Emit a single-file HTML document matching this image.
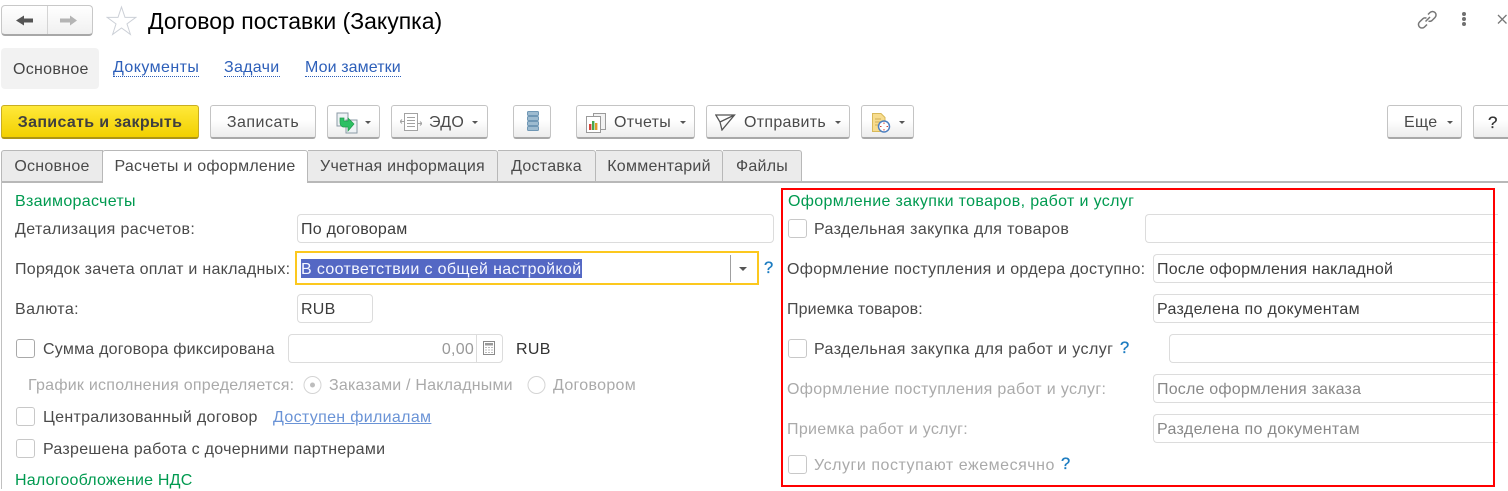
<!DOCTYPE html>
<html lang="ru"><head><meta charset="utf-8"><title>Договор поставки (Закупка)</title>
<style>
html,body{margin:0;padding:0;background:#fff}
body{width:1508px;height:489px;overflow:hidden;position:relative;font-family:"Liberation Sans",Arial,sans-serif;font-size:16px;color:#4a4a4a;letter-spacing:.3px}
.t{position:absolute;white-space:nowrap;height:20px;line-height:20px;margin-top:2px}
.btn{position:absolute;top:105px;height:31px;box-sizing:content-box;border:1px solid #c4c4c4;border-bottom:2px solid #a8a8a8;border-radius:3px;background:linear-gradient(#fff 0%,#fff 45%,#ececec 100%);color:#4a4a4a;line-height:33px;white-space:nowrap}
.btn span{position:absolute;top:0}
.arr{position:absolute;width:0;height:0;border-left:3px solid transparent;border-right:3px solid transparent;border-top:3px solid #555}
.tab{position:absolute;top:150px;height:31px;box-sizing:content-box;background:#ebebeb;border:1px solid #b8b8b8;border-bottom:0;border-left:0;border-radius:0 3px 0 0;line-height:31px;text-align:center;color:#4a4a4a;white-space:nowrap;letter-spacing:.25px}
.in{position:absolute;height:27px;border:1px solid #dcdcdc;border-radius:4px;background:#fff;line-height:29px;color:#3c3c3c;white-space:nowrap;box-sizing:content-box;letter-spacing:.25px}
.in span{position:absolute;left:3px;top:0}
.cb{position:absolute;width:17px;height:17px;border:1px solid #a9a9a9;border-radius:3px;background:#fff}
.cb.l{border-color:#c8c8c8}
.g{color:#009a50}
.d{color:#aaa}
.q{color:#1a7bc0;font-size:16.5px;-webkit-text-stroke:.3px #1a7bc0}
.lnk{color:#2d5fb9;border-bottom:1px dotted #2d5fb9;height:16px;line-height:16px;margin-top:0}
</style></head><body>

<!-- nav buttons -->
<div style="position:absolute;left:1px;top:5px;width:90px;height:28px;border:1px solid #c8c8c8;border-bottom:2px solid #a8a8a8;border-radius:4px;background:linear-gradient(#fff,#f0f0f0)"></div>
<div style="position:absolute;left:47px;top:6px;width:1px;height:28px;background:#d4d4d4"></div>
<svg style="position:absolute;left:14px;top:12px" width="22" height="16"><path d="M2 8.5 L10 3.5 V6.5 H19 V10.5 H10 V13.5Z" fill="#555"/></svg>
<svg style="position:absolute;left:59px;top:12px" width="22" height="16"><path d="M18 8.5 L11 3.5 V6.5 H1 V10.5 H11 V13.5Z" fill="#b4b4b4"/></svg>
<svg style="position:absolute;left:106px;top:5px" width="31" height="31"><path d="M15.5 2 L19 12.4 H29.8 L21 18.9 L24.4 29.4 L15.5 23 L6.6 29.4 L10 18.9 L1.2 12.4 H12Z" fill="#fff" stroke="#ccd0d7" stroke-width="1"/></svg>
<div class="t" style="left:148px;top:6px;height:30px;line-height:30px;font-size:23px;color:#000;margin:0;letter-spacing:0">Договор поставки (Закупка)</div>

<!-- top right -->
<svg style="position:absolute;left:1417px;top:9px" width="21" height="21" fill="none" stroke="#777" stroke-width="1.5"><path d="M8.5 12.5 L13 8"/><path d="M11 5.5 L13 3.5 a3.4 3.4 0 0 1 5 5 L15 11.5 a3.4 3.4 0 0 1 -3.5 .6"/><path d="M10 15.5 L7.5 18 a3.4 3.4 0 0 1 -5 -5 L5.8 9.8 a3.4 3.4 0 0 1 3.7 -.6"/></svg>
<svg style="position:absolute;left:1460px;top:11px" width="8" height="16" fill="#707070"><circle cx="4" cy="3" r="2"/><circle cx="4" cy="8" r="2"/><circle cx="4" cy="13" r="2"/></svg>
<svg style="position:absolute;left:1497px;top:14px" width="11" height="11" stroke="#777" stroke-width="1.3"><path d="M1 1 L9.5 9.5 M9.5 1 L1 9.5"/></svg>

<!-- section nav -->
<div style="position:absolute;left:1px;top:48px;width:98px;height:41px;background:#f2f2f2;border-radius:4px"></div>
<div class="t" style="left:13px;top:58px;color:#444">Основное</div>
<div class="t lnk" style="left:113px;top:60px;letter-spacing:.42px">Документы</div>
<div class="t lnk" style="left:224px;top:60px">Задачи</div>
<div class="t lnk" style="left:305px;top:60px;letter-spacing:.1px">Мои заметки</div>

<!-- command bar -->
<div class="btn" style="left:1px;width:196px;background:linear-gradient(#ffe93a,#f2d000);border-color:#c9ae22;border-bottom-color:#ad9515;font-weight:bold;color:#3f3f3f;text-align:center;letter-spacing:.33px">Записать и закрыть</div>
<div class="btn" style="left:210px;width:104px;text-align:center;letter-spacing:.5px">Записать</div>
<div class="btn" style="left:327px;width:51px">
<svg style="position:absolute;left:8px;top:5px" width="24" height="24"><rect x="1" y="2" width="11" height="13" fill="#eef2f5" stroke="#8b9aa5"/><rect x="10" y="9" width="11" height="13" fill="#eef2f5" stroke="#8b9aa5"/><path d="M4 7 H8 V10 H12 V7 L18 13 L12 20 V16 H7 Q4 15 4 11Z" fill="#2cc063" stroke="#1f9a4c" stroke-width=".7"/></svg>
<i class="arr" style="left:37px;top:15px"></i></div>
<div class="btn" style="left:391px;width:95px">
<svg style="position:absolute;left:8px;top:6px" width="22" height="22" fill="none" stroke="#a2a2a2"><rect x="4.5" y="1.5" width="13" height="17" fill="#fff"/><path d="M7 5.5H15M7 8.5H15M7 11.5H15M7 14.5H15"/><path d="M0 9.5H4M2 7.5L0 9.5L2 11.5M18 11.5H22M20 9.5L22 11.5L20 13.5"/></svg>
<span style="left:37px">ЭДО</span><i class="arr" style="left:80px;top:15px"></i></div>
<div class="btn" style="left:513px;width:36px">
<svg style="position:absolute;left:13px;top:5px" width="13" height="21"><g fill="#9dbbd0" stroke="#6f97b5"><rect x=".5" y=".5" width="11" height="4" rx="1"/><rect x=".5" y="5.5" width="11" height="4" rx="1"/><rect x=".5" y="10.5" width="11" height="4" rx="1"/><rect x=".5" y="15.5" width="11" height="4" rx="1"/></g></svg></div>
<div class="btn" style="left:576px;width:117px">
<svg style="position:absolute;left:8px;top:6px" width="22" height="22"><rect x="8.5" y="1.5" width="12" height="16" fill="#f2f2f2" stroke="#9a9a9a"/><rect x="1.5" y="4.5" width="14" height="16" fill="#fff" stroke="#9a9a9a"/><rect x="4" y="12" width="2.4" height="6" fill="#d8453a"/><rect x="7" y="9" width="2.4" height="9" fill="#48a84c"/><rect x="10" y="11" width="2.4" height="7" fill="#e09b2c"/></svg>
<span style="left:37px">Отчеты</span><i class="arr" style="left:103px;top:15px"></i></div>
<div class="btn" style="left:706px;width:142px">
<svg style="position:absolute;left:8px;top:7px" width="22" height="18" fill="none" stroke="#555" stroke-width="1.3"><path d="M.8 2 H19.5 L7 17 L5 9 Z M5 9 L19.5 2"/></svg>
<span style="left:37px">Отправить</span><i class="arr" style="left:128px;top:15px"></i></div>
<div class="btn" style="left:861px;width:51px">
<svg style="position:absolute;left:9px;top:5px" width="24" height="24"><path d="M1.5 2.5 H10 L14 6.5 V20.5 H1.5Z" fill="#f7dc8e" stroke="#d8b95a"/><path d="M4 8H10M4 11H9M4 14H7" stroke="#cfae55"/><circle cx="13" cy="15.5" r="5.5" fill="#fff" stroke="#4d7fc0" stroke-width="1.5"/><path d="M13 11.5V13M13 18V19.5M9 15.5H10.5M15.5 15.5H17" stroke="#d8453a" fill="none"/></svg>
<i class="arr" style="left:37px;top:15px"></i></div>
<div class="btn" style="left:1387px;width:73px"><span style="left:16px">Еще</span><i class="arr" style="left:59px;top:15px"></i></div>
<div class="btn" style="left:1473px;width:40px"><span style="left:14px;color:#333;font-size:17px;-webkit-text-stroke:.2px #333">?</span></div>

<!-- tabs -->
<div class="tab" style="left:1px;width:100px;border-left:1px solid #b8b8b8;border-radius:3px 0 0 0">Основное</div>
<div class="tab" style="left:308px;width:189px">Учетная информация</div>
<div class="tab" style="left:498px;width:97px">Доставка</div>
<div class="tab" style="left:596px;width:126px">Комментарий</div>
<div class="tab" style="left:723px;width:78px">Файлы</div>
<div style="position:absolute;left:1px;top:181px;width:1507px;height:2px;background:#b8b8b8"></div>
<div style="position:absolute;left:1px;top:181px;height:308px;background:#c0c0c0;width:1px"></div>
<div style="position:absolute;left:102px;top:150px;width:206px;height:33px;background:#fff;border:1px solid #b8b8b8;border-bottom:0;box-sizing:border-box;border-radius:3px 3px 0 0;text-align:center;line-height:31px;white-space:nowrap;letter-spacing:.25px">Расчеты и оформление</div>

<!-- left column -->
<div class="t g" style="left:15px;top:190px">Взаиморасчеты</div>
<div class="t" style="left:15px;top:218px;letter-spacing:.38px">Детализация расчетов:</div>
<div class="in" style="left:297px;top:214px;width:475px"><span>По договорам</span></div>
<div class="t" style="left:15px;top:258px;letter-spacing:.27px">Порядок зачета оплат и накладных:</div>
<div style="position:absolute;left:295px;top:251px;width:460px;height:30px;border:2px solid #fcc81e;background:#fff"></div>
<div class="t" style="left:301px;top:257px;height:19px;line-height:21px;background:#5468c4;color:#f4f6ff;letter-spacing:.36px">В соответствии с общей настройкой</div>
<div style="position:absolute;left:730px;top:255px;width:1px;height:27px;background:#a0a0a0"></div>
<i class="arr" style="left:739px;top:267px;border-left-width:4px;border-right-width:4px;border-top-width:4px"></i>
<div class="t q" style="left:764px;top:256px">?</div>
<div class="t" style="left:15px;top:298px;letter-spacing:.43px">Валюта:</div>
<div class="in" style="left:297px;top:294px;width:74px"><span>RUB</span></div>
<div class="cb" style="left:16px;top:339px"></div>
<div class="t" style="left:43px;top:338px;letter-spacing:.23px">Сумма договора фиксирована</div>
<div class="in" style="left:288px;top:334px;width:213px;color:#999"><span style="left:auto;right:28px">0,00</span>
<i style="position:absolute;left:187px;top:0;width:1px;height:27px;background:#dcdcdc"></i>
<svg style="position:absolute;left:194px;top:6px" width="13" height="15"><rect x=".5" y=".5" width="11" height="13" fill="#fff" stroke="#8a8a8a"/><rect x="2" y="2" width="8" height="2.5" fill="#999"/><path d="M2.5 6.5h1M5.5 6.5h1M8.5 6.5h1M2.5 9h1M5.5 9h1M8.5 9h1M2.5 11.5h1M5.5 11.5h1M8.5 11.5h1" stroke="#777"/></svg></div>
<div class="t" style="left:516px;top:338px;color:#333">RUB</div>
<div class="t d" style="left:28px;top:374px;letter-spacing:.25px">График исполнения определяется:</div>
<svg style="position:absolute;left:303px;top:375px" width="20" height="20"><circle cx="9.5" cy="10" r="8.5" fill="#fff" stroke="#d4d4d4"/><circle cx="9.5" cy="10" r="2.5" fill="#bdbdbd"/></svg>
<div class="t d" style="left:329px;top:374px;letter-spacing:.2px">Заказами / Накладными</div>
<svg style="position:absolute;left:527px;top:375px" width="20" height="20"><circle cx="9.5" cy="10" r="8.5" fill="#fff" stroke="#d4d4d4"/></svg>
<div class="t d" style="left:553px;top:374px">Договором</div>
<div class="cb l" style="left:16px;top:407px"></div>
<div class="t" style="left:43px;top:406px;letter-spacing:.3px">Централизованный договор</div>
<div class="t" style="left:273px;top:406px;color:#6a93d6;text-decoration:underline;letter-spacing:.33px">Доступен филиалам</div>
<div class="cb l" style="left:16px;top:439px"></div>
<div class="t" style="left:43px;top:438px;letter-spacing:.28px">Разрешена работа с дочерними партнерами</div>
<div class="t g" style="left:15px;top:469px;letter-spacing:.21px">Налогообложение НДС</div>

<!-- right column -->
<div class="t g" style="left:788px;top:190px;letter-spacing:.34px">Оформление закупки товаров, работ и услуг</div>
<div class="cb l" style="left:788px;top:219px"></div>
<div class="t" style="left:814px;top:218px;letter-spacing:.37px">Раздельная закупка для товаров</div>
<div class="in" style="left:1145px;top:214px;width:352px;border-right:0;border-radius:4px 0 0 4px"></div>
<div class="t" style="left:787px;top:258px;letter-spacing:.29px">Оформление поступления и ордера доступно:</div>
<div class="in" style="left:1153px;top:254px;width:344px;border-right:0;border-radius:4px 0 0 4px"><span style="letter-spacing:.23px">После оформления накладной</span></div>
<div class="t" style="left:787px;top:298px;letter-spacing:.12px">Приемка товаров:</div>
<div class="in" style="left:1153px;top:294px;width:344px;border-right:0;border-radius:4px 0 0 4px"><span style="letter-spacing:.35px">Разделена по документам</span></div>
<div class="cb l" style="left:788px;top:339px"></div>
<div class="t" style="left:814px;top:338px;letter-spacing:.42px">Раздельная закупка для работ и услуг</div>
<div class="t q" style="left:1120px;top:336px">?</div>
<div class="in" style="left:1169px;top:334px;width:328px;border-right:0;border-radius:4px 0 0 4px"></div>
<div class="t d" style="left:787px;top:378px;letter-spacing:.34px">Оформление поступления работ и услуг:</div>
<div class="in" style="left:1153px;top:374px;width:344px;border-right:0;border-radius:4px 0 0 4px;color:#888"><span style="letter-spacing:.2px">После оформления заказа</span></div>
<div class="t d" style="left:787px;top:418px;letter-spacing:.32px">Приемка работ и услуг:</div>
<div class="in" style="left:1153px;top:414px;width:344px;border-right:0;border-radius:4px 0 0 4px;color:#888"><span style="letter-spacing:.35px">Разделена по документам</span></div>
<div class="cb l" style="left:788px;top:455px"></div>
<div class="t d" style="left:814px;top:454px;letter-spacing:.53px">Услуги поступают ежемесячно</div>
<div class="t q" style="left:1061px;top:452px">?</div>

<!-- red frame -->
<div style="position:absolute;left:781px;top:188px;width:710px;height:295px;border:2.5px solid #f00"></div>
</body></html>
